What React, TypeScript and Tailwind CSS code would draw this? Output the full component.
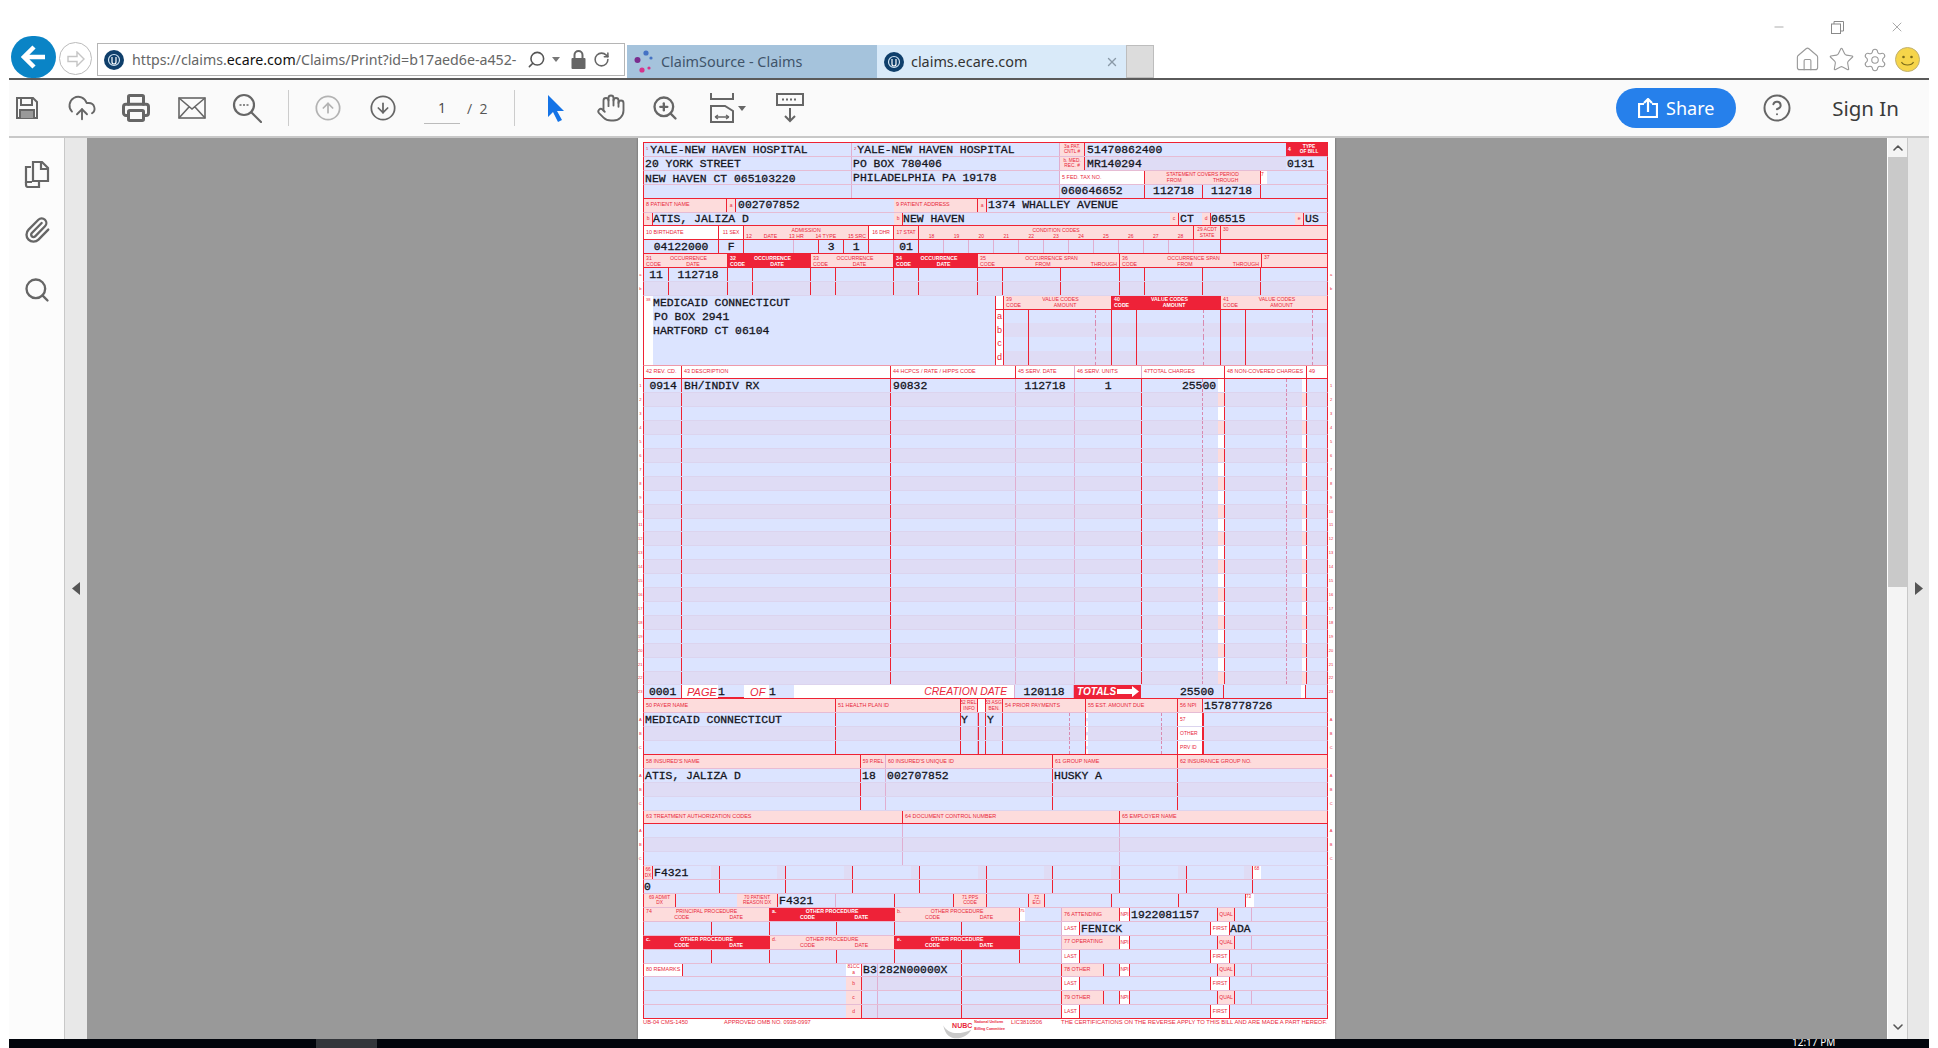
import React from "react";
import { CloudUpload, Printer, CircleArrowUp, CircleArrowDown, Hand, ZoomIn, CircleHelp, House, Star, Settings, Paperclip, Search, RotateCw, Minus, X, ChevronUp, ChevronDown } from "lucide-react";

type P = { children?: React.ReactNode };
const kinds: Record<string, string> = {
  t: "",
  p: "bg-[#fddcdc] text-[#e8273a]",
  r: "bg-[#ee2238] text-white",
  w: "bg-white text-[#e8273a]",
  d: "bg-[#dfdcf5]",
  f: "bg-[#dce4ff]",
};
const borders: Record<string, string> = {
  r: "border-r border-r-[#ee2233]",
  s: "border-r border-r-[#e0aed0]",
  h: "border-r border-dashed border-r-[#d98ab0]",
  n: "",
};
function C({ w, k = "t", b = "r", className = "", children }: { w: string; k?: string; b?: string; className?: string; children?: React.ReactNode }) {
  return <div className={`flex h-full shrink-0 items-center whitespace-nowrap ${w} ${kinds[k]} ${borders[b]} ${className}`}>{children}</div>;
}
function Row({ alt, strong, soft, l, r, children }: { alt?: boolean; strong?: boolean; soft?: boolean; l?: string; r?: string; children?: React.ReactNode }) {
  return (
    <div className="flex h-[13.92px]">
      <div className="flex w-[5.6px] shrink-0 items-center justify-center text-[4px] text-[#e8273a]">{l}</div>
      <div className={`flex w-[685px] shrink-0 border-x border-b border-x-[#ee2233] ${strong ? "border-b-[#ee2233]" : soft ? "border-b-[#dcd4ee]" : "border-b-[#e6bcd4]"} ${alt ? "bg-[#dfdcf5]" : "bg-[#dce4ff]"}`}>{children}</div>
      <div className="flex w-[6px] shrink-0 items-center justify-center text-[4px] text-[#e8273a]">{r}</div>
    </div>
  );
}
const T = ({ children, className = "" }: P & { className?: string }) => (
  <span className={`translate-y-[1px] font-['Liberation_Mono'] text-[11.4px] leading-none font-normal text-[#14141c] [-webkit-text-stroke:0.3px_#14141c] ${className}`}>{children}</span>
);
const L = ({ children, className = "" }: P & { className?: string }) => (
  <span className={`pl-[2px] text-[5.4px] leading-none ${className}`}>{children}</span>
);
function Two({ t, b, className = "" }: { t: string[]; b: string[]; className?: string }) {
  return (
    <div className={`flex w-full flex-col px-[2px] text-[5.2px] leading-[6.2px] ${className}`}>
      <div className="flex justify-between">{t.map((s, i) => <span key={i}>{s}</span>)}</div>
      <div className="flex justify-between">{b.map((s, i) => <span key={i}>{s}</span>)}</div>
    </div>
  );
}
const Sm = ({ children }: P) => <span className="w-full text-center text-[5px] leading-none text-[#e8273a]">{children}</span>;
const Tiny = ({ a, b }: { a: string; b: string }) => (
  <div className="flex w-full flex-col items-center text-[4.8px] leading-[5.6px]"><span>{a}</span><span>{b}</span></div>
);

function Occ({ alt, text, l, r }: { alt?: boolean; text?: boolean; l: string; r: string }) {
  return (
    <Row alt={alt} soft l={l} r={r}>
      <C w="w-[25px]" className="justify-center">{text && <T>11</T>}</C>
      <C w="w-[59px]" className="justify-center">{text && <T>112718</T>}</C>
      <C w="w-[25px]" />
      <C w="w-[58px]" />
      <C w="w-[25px]" />
      <C w="w-[58px]" />
      <C w="w-[25px]" />
      <C w="w-[59px]" />
      <C w="w-[25px]" />
      <C w="w-[58px]" />
      <C w="w-[59px]" />
      <C w="w-[25px]" />
      <C w="w-[58px]" />
      <C w="w-[58px]" />
      <div className="flex-1" />
    </Row>
  );
}
function Line({ n }: { n: number }) {
  const alt = n % 2 === 0;
  return (
    <Row alt={alt} soft l={String(n)} r={String(n)}>
      <C w="w-[38px]" className="justify-center pl-[1px]">{n === 1 && <T>0914</T>}</C>
      <C w="w-[209px]" className="pl-[2px]">{n === 1 && <T>BH/INDIV RX</T>}</C>
      <C w="w-[125px]" b="s" className="pl-[2px]">{n === 1 && <T>90832</T>}</C>
      <C w="w-[59px]" b="s" className="justify-center">{n === 1 && <T>112718</T>}</C>
      <C w="w-[67px]" className="justify-center">{n === 1 && <T>1</T>}</C>
      <C w="w-[61px]" b="h" />
      <C w="w-[15px]" b="n" className="relative">{n === 1 && <T className="absolute right-[2px]">25500</T>}</C>
      <C w="w-[7px]" k={alt ? "p" : "w"} />
      <C w="w-[62px]" b="h" />
      <C w="w-[15px]" b="n" />
      <C w="w-[5px]" k={alt ? "p" : "w"} />
      <div className="flex-1" />
    </Row>
  );
}

function PayerRow({ l, alt, text, label }: { l: string; alt?: boolean; text?: boolean; label: React.ReactNode }) {
  return (
    <Row l={l} r={l} alt={alt} soft={l !== "C"} strong={l === "C"}>
      <C w="w-[192px]">{text && <T className="pl-[1px]">MEDICAID CONNECTICUT</T>}</C>
      <C w="w-[125px]" />
      <C w="w-[17px]" b="s">{text && <T>Y</T>}</C>
      <C w="w-[8px]" className="border-l border-l-[#ee2233]" />
      <C w="w-[17px]" className="pl-[1px]">{text && <T>Y</T>}</C>
      <C w="w-[67px]" b="h" />
      <C w="w-[16px]" />
      <C w="w-[76px]" b="h" className="border-l-2 border-l-white" />
      <C w="w-[16px]" />
      <C w="w-[25px]" k="w" className="pl-[2px] text-[5px]">{label}</C>
      <div className="flex-1 border-l border-l-[#ee2233]" />
    </Row>
  );
}
function InsRow({ l, alt, text }: { l: string; alt?: boolean; text?: boolean }) {
  return (
    <Row l={l} r={l} alt={alt} soft>
      <C w="w-[217px]" className="pl-[1px]">{text && <T>ATIS, JALIZA D</T>}</C>
      <C w="w-[25px]" b="s" className="pl-[1px]">{text && <T>18</T>}</C>
      <C w="w-[167px]" className="pl-[1px]">{text && <T>002707852</T>}</C>
      <C w="w-[125px]" className="pl-[1px]">{text && <T>HUSKY A</T>}</C>
      <div className="flex-1" />
    </Row>
  );
}
function DxCells({ alt }: { alt?: boolean }) {
  return (
    <>
      {[0, 1, 2, 3, 4, 5, 6, 7, 8].map((i) => (
        <div key={i} className="flex h-full w-[66.7px] shrink-0 justify-end border-r border-r-[#ee2233]">
          {!alt && <div className="h-full w-[8px] bg-[#dfdcf5]" />}
        </div>
      ))}
    </>
  );
}
function ProcHead({ k, w, a, b = "" }: { k: string; w: string; a: string; b?: string }) {
  return (
    <C w={w} k={k}>
      <div className={`flex w-full flex-col text-[5.2px] leading-[6.2px] ${k === "r" ? "font-bold" : ""}`}>
        <div className="relative text-center">
          <span className="absolute left-[2px]">{a}</span>
          {b}
        </div>
        <div className="flex justify-around pl-[10px] pr-[6px]"><span>CODE</span><span>DATE</span></div>
      </div>
    </C>
  );
}
function ProcCells() {
  return (
    <>
      <C w="w-[68px]" />
      <C w="w-[58px]" />
      <C w="w-[67px]" />
      <C w="w-[58px]" />
      <C w="w-[67px]" />
      <C w="w-[58px]" />
    </>
  );
}
function Phys({ name, npi, hw = "w-[58px]" }: { name: string; npi?: string; hw?: string }) {
  return (
    <>
      <C w={hw} k="p"><L>{name}</L></C>
      {hw === "w-[42px]" && <C w="w-[16px]" />}
      <C w="w-[10px]" k="w"><Sm>NPI</Sm></C>
      <C w="w-[88px]" className="pl-[1px]">{npi && <T>{npi}</T>}</C>
      <C w="w-[17px]" k="p"><Sm>QUAL</Sm></C>
      <C w="w-[17px]" b="s" />
      <div className="flex-1" />
    </>
  );
}
function Names({ last, first }: { last?: string; first?: string }) {
  return (
    <>
      <C w="w-[18px]" k="w"><Sm>LAST</Sm></C>
      <C w="w-[131px]" className="pl-[1px]">{last && <T>{last}</T>}</C>
      <C w="w-[19px]" k="w"><Sm>FIRST</Sm></C>
      <div className="flex flex-1 items-center">{first && <T>{first}</T>}</div>
    </>
  );
}

function Form() {
  return (
    <div className="flex w-[697px] shrink-0 flex-col bg-white pt-[4px] font-['Liberation_Sans'] text-[#e8273a] shadow-[0_0_2px_rgba(0,0,0,0.4)]">
      <div className="ml-[5.6px] h-px w-[685px] shrink-0 bg-[#ee2233]" />
      <Row>
        <C w="w-[208px]" b="s" className="gap-[1px] pl-[2px]"><span className="text-[4px] text-[#e8273a]">1</span><T className="pl-[1px]">YALE-NEW HAVEN HOSPITAL</T></C>
        <C w="w-[208px]" b="s" className="gap-[1px] pl-[2px]"><span className="text-[4px] text-[#e8273a]">2</span><T>YALE-NEW HAVEN HOSPITAL</T></C>
        <C w="w-[25px]" k="p"><Tiny a="3a PAT." b="CNTL #" /></C>
        <C w="w-[201px]" b="n" className="pl-[2px]"><T>51470862400</T></C>
        <C w="w-[42px]" k="r" b="n" className="flex-1 font-bold"><span className="pl-[2px] text-[5px]">4</span><Tiny a="TYPE" b="OF BILL" /></C>
      </Row>
      <Row alt>
        <C w="w-[208px]" b="s" className="bg-[#dce4ff] pl-[1px]"><T>20 YORK STREET</T></C>
        <C w="w-[208px]" b="s" className="bg-[#dce4ff] pl-[1px]"><T>PO BOX 780406</T></C>
        <C w="w-[25px]" k="p"><Tiny a="b. MED." b="REC. #" /></C>
        <C w="w-[201px]" b="n" className="pl-[2px]"><T>MR140294</T></C>
        <div className="flex flex-1 items-center bg-[#dce4ff] pl-[1px]"><T>0131</T></div>
      </Row>
      <Row>
        <C w="w-[208px]" b="s" className="pl-[1px] pt-[2px]"><T>NEW HAVEN CT 065103220</T></C>
        <C w="w-[208px]" b="s" className="pl-[1px] pt-[1px]"><T>PHILADELPHIA PA 19178</T></C>
        <C w="w-[85px]" k="w"><L>5 FED. TAX NO.</L></C>
        <C w="w-[116px]" k="p"><div className="flex w-full flex-col text-[5px] leading-[6px]"><div className="text-center">STATEMENT COVERS PERIOD</div><div className="flex justify-around px-[6px]"><span>FROM</span><span>THROUGH</span></div></div></C>
        <C w="w-[6px]" k="w" b="n" className="items-start text-[5px]">7</C>
      </Row>
      <Row strong>
        <C w="w-[208px]" b="s" />
        <C w="w-[208px]" b="s" />
        <C w="w-[85px]" className="pl-[1px]"><T>060646652</T></C>
        <C w="w-[58px]" className="justify-center"><T>112718</T></C>
        <C w="w-[58px]" className="justify-center"><T>112718</T></C>
        <div className="flex-1" />
      </Row>
      <Row>
        <C w="w-[83px]" k="p"><L>8 PATIENT NAME</L></C>
        <C w="w-[9px]" k="p"><Sm>a</Sm></C>
        <C w="w-[158px]" b="n" className="pl-[2px]"><T>002707852</T></C>
        <C w="w-[84px]" k="p"><L>9 PATIENT ADDRESS</L></C>
        <C w="w-[9px]" k="p"><Sm>a</Sm></C>
        <div className="flex flex-1 items-center pl-[1px]"><T>1374 WHALLEY AVENUE</T></div>
      </Row>
      <Row strong>
        <C w="w-[9px]" k="p"><Sm>b</Sm></C>
        <C w="w-[241px]" b="n"><T>ATIS, JALIZA D</T></C>
        <C w="w-[9px]" k="p"><Sm>b</Sm></C>
        <C w="w-[267px]" b="n"><T>NEW HAVEN</T></C>
        <C w="w-[9px]" k="p"><Sm>c</Sm></C>
        <C w="w-[23px]" b="n" className="pl-[1px]"><T>CT</T></C>
        <C w="w-[9px]" k="p"><Sm>d</Sm></C>
        <C w="w-[84px]" b="n"><T>06515</T></C>
        <C w="w-[9px]" k="p"><Sm>e</Sm></C>
        <div className="flex flex-1 items-center pl-[1px]"><T>US</T></div>
      </Row>
      <Row strong>
        <C w="w-[75px]" k="w"><L>10 BIRTHDATE</L></C>
        <C w="w-[25px]" k="w"><Sm>11 SEX</Sm></C>
        <C w="w-[125px]" k="p"><Two className="text-[4.8px]" t={["", "ADMISSION", ""]} b={["12", "DATE", "13 HR", "14 TYPE", "15 SRC"]} /></C>
        <C w="w-[25px]" k="w"><Sm>16 DHR</Sm></C>
        <C w="w-[25px]" k="p"><Sm>17 STAT</Sm></C>
        <C w="w-[275px]" k="p"><div className="flex w-full flex-col text-[5px] leading-[6px]"><div className="text-center">CONDITION CODES</div><div className="flex justify-around">{[18, 19, 20, 21, 22, 23, 24, 25, 26, 27, 28].map((n) => <span key={n}>{n}</span>)}</div></div></C>
        <C w="w-[27px]" k="p"><Tiny a="29 ACDT" b="STATE" /></C>
        <div className="flex-1 bg-[#fddcdc] pl-[2px] text-[5px]">30</div>
      </Row>
      <Row strong>
        <C w="w-[75px]" className="justify-center"><T>04122000</T></C>
        <C w="w-[25px]" className="justify-center"><T>F</T></C>
        <C w="w-[50px]" b="s" />
        <C w="w-[25px]" />
        <C w="w-[25px]" className="justify-center"><T>3</T></C>
        <C w="w-[25px]" className="justify-center"><T>1</T></C>
        <C w="w-[25px]" b="s" />
        <C w="w-[25px]" className="justify-center"><T>01</T></C>
        {[0, 1, 2, 3, 4, 5, 6, 7, 8, 9, 10].map((i) => <C key={i} w="w-[25px]" b="s" />)}
        <C w="w-[27px]" />
        <div className="flex-1" />
      </Row>
      <Row strong>
        <C w="w-[84px]" k="p"><Two t={["31", "OCCURRENCE", ""]} b={["CODE", "DATE", ""]} /></C>
        <C w="w-[83px]" k="r" b="n" className="font-bold"><Two t={["32", "OCCURRENCE", ""]} b={["CODE", "DATE", ""]} /></C>
        <C w="w-[83px]" k="p"><Two t={["33", "OCCURRENCE", ""]} b={["CODE", "DATE", ""]} /></C>
        <C w="w-[84px]" k="r" b="n" className="font-bold"><Two t={["34", "OCCURRENCE", ""]} b={["CODE", "DATE", ""]} /></C>
        <C w="w-[142px]" k="p"><Two t={["35", "OCCURRENCE SPAN", ""]} b={["CODE", "FROM", "THROUGH"]} /></C>
        <C w="w-[142px]" k="p"><Two t={["36", "OCCURRENCE SPAN", ""]} b={["CODE", "FROM", "THROUGH"]} /></C>
        <div className="flex flex-1 items-start bg-[#fddcdc] pl-[2px] text-[5px]">37</div>
      </Row>
      <Occ text l="a" r="a" />
      <Occ alt l="b" r="b" />
      <div className="flex h-[69.6px] shrink-0">
        <div className="w-[5.6px] shrink-0" />
        <div className="flex w-[685px] shrink-0 border-x border-b border-x-[#ee2233] border-b-[#ee9aaa] bg-[#dce4ff]">
          <div className="flex h-full w-[351px] shrink-0">
            <div className="h-full w-[9px] bg-white pl-[2px] text-[4px] leading-[8px]">38</div>
            <div className="flex flex-col pt-[1px]">
              <T className="h-[14px] leading-[13px]">MEDICAID CONNECTICUT</T>
              <T className="h-[14px] pl-[1px] leading-[15px]">PO BOX 2941</T>
              <T className="h-[14px] leading-[15px]">HARTFORD CT 06104</T>
            </div>
          </div>
          <div className="flex h-full flex-1 flex-col border-l border-l-[#ee2233]">
            <div className="flex h-[13.9px] border-b border-b-[#ee2233]">
              <C w="w-[8px]" k="w" />
              <C w="w-[108px]" k="p"><Two t={["39", "VALUE CODES", ""]} b={["CODE", "AMOUNT", ""]} /></C>
              <C w="w-[109px]" k="r" b="n" className="font-bold"><Two t={["40", "VALUE CODES", ""]} b={["CODE", "AMOUNT", ""]} /></C>
              <div className="flex h-full flex-1 items-center bg-[#fddcdc]"><Two t={["41", "VALUE CODES", ""]} b={["CODE", "AMOUNT", ""]} /></div>
            </div>
            {["a", "b", "c", "d"].map((x, i) => (
              <div key={x} className={`flex h-[13.9px] ${i % 2 ? "bg-[#dfdcf5]" : "bg-[#dce4ff]"}`}>
                <C w="w-[8px]" k="w" className="justify-center text-[9px]">{x}</C>
                <C w="w-[25px]" />
                <C w="w-[67px]" b="h" />
                <C w="w-[16px]" />
                <C w="w-[25px]" />
                <C w="w-[67px]" b="h" />
                <C w="w-[17px]" />
                <C w="w-[25px]" />
                <C w="w-[67px]" b="h" />
                <div className="flex-1" />
              </div>
            ))}
          </div>
        </div>
      </div>
      <Row strong>
        <C w="w-[38px]" k="w"><L>42 REV. CD.</L></C>
        <C w="w-[209px]" k="w"><L>43 DESCRIPTION</L></C>
        <C w="w-[125px]" k="w"><L>44 HCPCS / RATE / HIPPS CODE</L></C>
        <C w="w-[59px]" k="w" b="s"><L>45 SERV. DATE</L></C>
        <C w="w-[67px]" k="w" b="s"><L>46 SERV. UNITS</L></C>
        <C w="w-[83px]" k="w"><L>47TOTAL CHARGES</L></C>
        <C w="w-[82px]" k="w"><L>48 NON-COVERED CHARGES</L></C>
        <div className="flex flex-1 items-center bg-white"><L>49</L></div>
      </Row>
      {Array.from({ length: 22 }, (_, i) => <Line key={i} n={i + 1} />)}
      <Row strong l="23" r="23">
        <C w="w-[38px]" className="justify-center"><T>0001</T></C>
        <C w="w-[36px]" k="w" b="n" className="pl-[5px] text-[11px] italic">PAGE</C>
        <C w="w-[26px]" b="n" className="border-b border-b-[#ee2233]"><T>1</T></C>
        <C w="w-[25px]" k="w" b="n" className="pl-[6px] text-[11px] italic">OF</C>
        <C w="w-[25px]" b="n"><T>1</T></C>
        <C w="w-[221px]" k="w" b="s" className="justify-end pr-[7px] text-[10.4px] italic">CREATION DATE</C>
        <C w="w-[59px]" b="s" className="justify-center"><T>120118</T></C>
        <C w="w-[67px]" k="r" b="n" className="justify-between pl-[3px] pr-[1px] text-[10px] font-bold italic">TOTALS
          <svg width="23" height="11" viewBox="0 0 23 11" className="shrink-0"><path d="M0 3h15V0l7 5.5-7 5.5V8H0z" fill="#fff" /></svg>
        </C>
        <C w="w-[61px]" b="n" />
        <C w="w-[22px]" className="relative"><T className="absolute right-[9px]">25500</T></C>
        <C w="w-[77px]" b="n" />
        <C w="w-[5px]" k="w" />
        <div className="flex-1" />
      </Row>
      <Row>
        <C w="w-[192px]" k="p"><L>50 PAYER NAME</L></C>
        <C w="w-[125px]" k="p"><L>51 HEALTH PLAN ID</L></C>
        <C w="w-[17px]" k="p"><Tiny a="52 REL." b="INFO" /></C>
        <C w="w-[8px]" k="w" />
        <C w="w-[17px]" k="p"><Tiny a="53 ASG." b="BEN." /></C>
        <C w="w-[83px]" k="p"><L>54 PRIOR PAYMENTS</L></C>
        <C w="w-[92px]" k="p"><L>55 EST. AMOUNT DUE</L></C>
        <C w="w-[25px]" k="p"><L>56 NPI</L></C>
        <div className="flex flex-1 items-center pl-[1px]"><T>1578778726</T></div>
      </Row>
      <PayerRow l="A" text label="57" />
      <PayerRow l="B" alt label="OTHER" />
      <PayerRow l="C" label="PRV ID" />
      <Row>
        <C w="w-[217px]" k="p"><L>58 INSURED'S NAME</L></C>
        <C w="w-[25px]" k="p" b="s"><Sm>59 P.REL</Sm></C>
        <C w="w-[167px]" k="p"><L>60 INSURED'S UNIQUE ID</L></C>
        <C w="w-[125px]" k="p"><L>61 GROUP NAME</L></C>
        <div className="flex flex-1 items-center bg-[#fddcdc]"><L>62 INSURANCE GROUP NO.</L></div>
      </Row>
      <InsRow l="A" text />
      <InsRow l="B" alt />
      <InsRow l="C" />
      <Row strong>
        <C w="w-[259px]" k="p"><L>63 TREATMENT AUTHORIZATION CODES</L></C>
        <C w="w-[217px]" k="p"><L>64 DOCUMENT CONTROL NUMBER</L></C>
        <div className="flex flex-1 items-center bg-[#fddcdc]"><L>65 EMPLOYER NAME</L></div>
      </Row>
      {["A", "B", "C"].map((l, i) => (
        <Row key={l} l={l} r={l} alt={i === 1} soft>
          <C w="w-[259px]" b="s" />
          <C w="w-[217px]" b="s" />
          <div className="flex-1" />
        </Row>
      ))}
      <Row>
        <C w="w-[9px]" k="p"><Tiny a="66" b="DX" /></C>
        <div className="relative flex flex-1">
          <DxCells />
          <T className="absolute left-[1px] top-[1px]">F4321</T>
          <div className="h-full w-[8px] shrink-0 bg-white pl-[1px] text-[4.5px] text-[#e8273a]">68</div>
        </div>
      </Row>
      <Row>
        <C w="w-[9px]" b="n"><T>0</T></C>
        <div className="flex flex-1"><DxCells alt /></div>
      </Row>
      <Row>
        <C w="w-[32px]" k="p"><Tiny a="69 ADMIT" b="DX" /></C>
        <C w="w-[61px]" b="n" />
        <C w="w-[41px]" k="p"><Tiny a="70 PATIENT" b="REASON DX" /></C>
        <C w="w-[58px]" b="s" className="pl-[1px]"><T>F4321</T></C>
        <C w="w-[59px]" />
        <C w="w-[59px]" />
        <C w="w-[33px]" k="p"><Tiny a="71 PPS" b="CODE" /></C>
        <C w="w-[42px]" />
        <C w="w-[16px]" k="p"><Tiny a="72" b="ECI" /></C>
        <C w="w-[67px]" className="justify-end" />
        <C w="w-[67px]" />
        <C w="w-[67px]" />
        <C w="w-[8px]" k="w" b="n" className="items-start text-[4.5px]">73</C>
        <div className="flex-1" />
      </Row>
      <Row>
        <ProcHead k="p" w="w-[126px]" a="74" b="PRINCIPAL PROCEDURE" />
        <ProcHead k="r" w="w-[125px]" a="a." b="OTHER PROCEDURE" />
        <ProcHead k="p" w="w-[125px]" a="b." b="OTHER PROCEDURE" />
        <C w="w-[5px]" k="w" b="n" className="items-start text-[4px]">75</C>
        <C w="w-[37px]" b="s" />
        <Phys name="76 ATTENDING" npi="1922081157" />
      </Row>
      <Row>
        <ProcCells />
        <C w="w-[42px]" b="s" />
        <Names last="FENICK" first="ADA" />
      </Row>
      <Row>
        <ProcHead k="r" w="w-[126px]" a="c." b="OTHER PROCEDURE" />
        <ProcHead k="p" w="w-[125px]" a="d." b="OTHER PROCEDURE" />
        <ProcHead k="r" w="w-[125px]" a="e." b="OTHER PROCEDURE" />
        <C w="w-[42px]" b="s" />
        <Phys name="77 OPERATING" />
      </Row>
      <Row>
        <ProcCells />
        <C w="w-[42px]" b="s" />
        <Names />
      </Row>
      <Row>
        <C w="w-[39px]" k="w"><L>80 REMARKS</L></C>
        <C w="w-[163px]" b="n" />
        <C w="w-[16px]" k="w"><Tiny a="81CC" b="a" /></C>
        <C w="w-[16px]" b="s" className="pl-[1px]"><T>B3</T></C>
        <C w="w-[84px]" className="pl-[1px]"><T>282N00000X</T></C>
        <C w="w-[100px]" />
        <Phys name="78 OTHER" hw="w-[42px]" />
      </Row>
      <Row>
        <C w="w-[202px]" b="n" />
        <C w="w-[16px]" k="p"><Sm>b</Sm></C>
        <C w="w-[16px]" b="s" className="bg-[#dfdcf5]" />
        <C w="w-[84px]" className="bg-[#dfdcf5]" />
        <C w="w-[100px]" className="bg-[#dfdcf5]" />
        <Names />
      </Row>
      <Row>
        <C w="w-[202px]" b="n" />
        <C w="w-[16px]" k="p"><Sm>c</Sm></C>
        <C w="w-[16px]" b="s" />
        <C w="w-[84px]" />
        <C w="w-[100px]" />
        <Phys name="79 OTHER" hw="w-[42px]" />
      </Row>
      <Row strong>
        <C w="w-[202px]" b="n" />
        <C w="w-[16px]" k="p"><Sm>d</Sm></C>
        <C w="w-[16px]" b="s" className="bg-[#dfdcf5]" />
        <C w="w-[84px]" className="bg-[#dfdcf5]" />
        <C w="w-[100px]" className="bg-[#dfdcf5]" />
        <Names />
      </Row>
      <div className="ml-[5.6px] flex w-[685px] items-start text-[5.7px] leading-[7px] whitespace-nowrap">
        <span className="w-[81px]">UB-04 CMS-1450</span>
        <span className="w-[228px]">APPROVED OMB NO. 0938-0997</span>
        <div className="relative flex w-[59px] items-center">
          <svg width="34" height="18" viewBox="0 0 30 16" className="absolute left-[-10px] top-[5px]"><path d="M1 1c4 8 14 9 25 4-5 9-22 13-25-4z" fill="#c9c9c9" /></svg>
          <span className="relative text-[7px] leading-[14px] font-bold">NUBC</span>
          <div className="relative pl-[2px] text-[3.6px] leading-[7px] font-bold"><div>National Uniform</div><div>Billing Committee</div></div>
        </div>
        <span className="w-[50px]">LIC3810506</span>
        <span className="text-[5.85px]">THE CERTIFICATIONS ON THE REVERSE APPLY TO THIS BILL AND ARE MADE A PART HEREOF.</span>
      </div>
    </div>
  );
}

const EcareLogo = () => (
  <svg width="20" height="20" viewBox="0 0 20 20" className="shrink-0">
    <circle cx="10" cy="10" r="10" fill="#0f3f6b" />
    <circle cx="10" cy="10" r="5.5" fill="none" stroke="#cfe3f3" strokeWidth="1.2" />
    <path d="M8 7v5a2 2 0 0 0 4 0V7" fill="none" stroke="#fff" strokeWidth="1.2" />
  </svg>
);

const Bare = "shrink-0 text-[#666]";

function Toolbar() {
  return (
    <div className="flex h-[58px] shrink-0 items-center border-b-2 border-b-[#c8c8c8] bg-[#fafafa]">
      <svg width="24" height="24" viewBox="0 0 24 24" className="ml-[6px] shrink-0" fill="none" stroke="#666" strokeWidth="2"><path d="M2 2h16l4 4v16H2z" /><path d="M6 2v7h11V2M5 22v-8h14v8" /><rect x="6" y="15" width="12" height="7" fill="#999" stroke="none" /></svg>
      <CloudUpload size={30} strokeWidth={1.5} className={`${Bare} ml-[28px]`} />
      <Printer size={30} strokeWidth={2.4} className={`${Bare} ml-[24px]`} />
      <svg width="28" height="22" viewBox="0 0 28 22" className="ml-[27px] shrink-0" fill="none" stroke="#666" strokeWidth="1.6"><rect x="1" y="1" width="26" height="20" /><path d="M1 1l13 11L27 1M1 21l10-11M27 21L17 10" /></svg>
      <svg width="30" height="30" viewBox="0 0 30 30" className="ml-[26px] shrink-0" fill="none" stroke="#666" strokeWidth="2.2"><circle cx="12" cy="12" r="10" /><path d="M19.5 19.5L29 29" strokeLinecap="round" /><path d="M7.5 12h2M11 12h2M14.5 12h2" strokeWidth="1.6" /></svg>
      <div className="ml-[26px] h-[36px] w-px shrink-0 bg-[#ccc]" />
      <CircleArrowUp size={28} strokeWidth={1.5} className="ml-[25px] shrink-0 text-[#b3b3b3]" />
      <CircleArrowDown size={28} strokeWidth={1.5} className={`${Bare} ml-[27px]`} />
      <div className="ml-[27px] flex h-[32px] w-[36px] shrink-0 items-center justify-center border-b border-b-[#bbb] font-['Open_Sans'] text-[14px] text-[#444]">1</div>
      <span className="ml-[7px] shrink-0 font-['Open_Sans'] text-[14px] whitespace-nowrap text-[#555]">/&nbsp; 2</span>
      <div className="ml-[27px] h-[36px] w-px shrink-0 bg-[#ccc]" />
      <svg width="18" height="28" viewBox="0 0 18 28" className="ml-[32px] shrink-0"><path d="M1 1l16 16h-7l5 9-4 2-5-10-5 5z" fill="#1473e6" /></svg>
      <Hand size={30} strokeWidth={1.5} className={`${Bare} ml-[31px]`} />
      <ZoomIn size={28} strokeWidth={2} className={`${Bare} ml-[25px]`} />
      <svg width="38" height="30" viewBox="0 0 38 30" className="ml-[30px] shrink-0" fill="none" stroke="#666" strokeWidth="2"><path d="M2 0v6h22V0" /><path d="M2 13h14l8 5v11H2z" /><path d="M6 24h14M6 24l3-2M6 24l3 2M20 24l-3-2M20 24l-3 2" strokeWidth="1.4" /><path d="M29 13h8l-4 5z" fill="#666" stroke="none" /></svg>
      <svg width="28" height="30" viewBox="0 0 28 30" className="ml-[29px] shrink-0" fill="none" stroke="#666" strokeWidth="2"><rect x="1" y="1" width="26" height="11" /><path d="M6 6.5h16" strokeDasharray="2 2" /><path d="M14 15v13M9 23l5 5 5-5" /></svg>
      <div className="flex-1" />
      <div className="flex h-[40px] w-[120px] shrink-0 items-center justify-center gap-[8px] rounded-full bg-[#2680eb] font-['Noto_Sans'] text-[18px] text-white">
        <svg width="20" height="20" viewBox="0 0 20 20" fill="none" stroke="#fff" strokeWidth="2.2"><path d="M6 6H1v13h18V6h-5" /><path d="M10 14V2M6 5l4-4 4 4" /></svg>
        Share
      </div>
      <CircleHelp size={30} strokeWidth={1.6} className={`${Bare} ml-[26px]`} />
      <span className="ml-[40px] mr-[30px] shrink-0 font-['Noto_Sans'] text-[20.5px] leading-none whitespace-nowrap text-[#3a3a3a]">Sign In</span>
    </div>
  );
}

export default function App() {
  return (
    <div className="flex h-[1048px] w-[1938px] flex-col overflow-hidden bg-white px-[9px] font-['Noto_Sans']">
      <header className="flex h-[80px] shrink-0 items-end border-b-2 border-b-[#5a5a5a]">
        <div className="ml-[2px] flex h-[42px] w-[45px] shrink-0 items-center justify-center rounded-full bg-[#0a84c6]">
          <svg width="26" height="24" viewBox="0 0 26 24" fill="none" stroke="#fff" strokeWidth="4.5"><path d="M24 12H4M13 2L3 12l10 10" /></svg>
        </div>
        <div className="mb-[3px] ml-[3px] flex h-[33px] w-[33px] shrink-0 items-center justify-center rounded-full border border-[#bbb]">
          <svg width="18" height="16" viewBox="0 0 18 16" fill="none" stroke="#c5c5c5" strokeWidth="1.4"><path d="M1 5.5h9V1l7 7-7 7v-4.5H1z" /></svg>
        </div>
        <div className="mb-[2px] ml-[5px] flex h-[33px] w-[528px] shrink-0 items-center border border-[#b5b5b5] pl-[6px] pr-[4px]">
          <EcareLogo />
          <div className="ml-[8px] w-[389px] shrink-0 overflow-hidden text-[14.2px] whitespace-nowrap text-[#666]">https://claims.<span className="text-[#111]">ecare.com</span>/Claims/Print?id=b17aed6e-a452-</div>
          <Search size={19} strokeWidth={2} className="ml-[6px] shrink-0 -scale-x-100 text-[#555]" />
          <svg width="8" height="5" viewBox="0 0 8 5" className="ml-[6px] shrink-0"><path d="M0 0h8L4 5z" fill="#777" /></svg>
          <svg width="15" height="19" viewBox="0 0 15 19" className="ml-[11px] shrink-0"><rect x="0.5" y="8" width="14" height="11" rx="1" fill="#666" /><path d="M3.5 8V5a4 4 0 0 1 8 0v3" fill="none" stroke="#666" strokeWidth="2" /></svg>
          <RotateCw size={17} strokeWidth={2.2} className="ml-[7px] shrink-0 text-[#666]" />
        </div>
        <div className="ml-[2px] flex h-[33px] w-[250px] shrink-0 items-center bg-[#a5c3dc] pl-[7px]">
          <svg width="20" height="26" viewBox="0 0 20 26" className="shrink-0">
            <circle cx="3.5" cy="11" r="3" fill="#7b2d8e" /><circle cx="12" cy="4" r="2.6" fill="#4472c4" /><circle cx="8" cy="21" r="2.6" fill="#d6338a" /><circle cx="15" cy="19" r="1.6" fill="#d6338a" /><circle cx="17" cy="9" r="1.6" fill="#4472c4" />
          </svg>
          <span className="ml-[7px] text-[14.4px] whitespace-nowrap text-[#40546a]">ClaimSource - Claims</span>
        </div>
        <div className="flex h-[33px] w-[249px] shrink-0 items-center bg-[#d9eaf9] pl-[7px] pr-[7px]">
          <EcareLogo />
          <span className="ml-[7px] flex-1 text-[14.4px] whitespace-nowrap text-[#333]">claims.ecare.com</span>
          <X size={14} strokeWidth={2.4} className="shrink-0 text-[#8a9aa8]" />
        </div>
        <div className="h-[33px] w-[28px] shrink-0 border border-[#bdbdbd] bg-[#dcdcdc]" />
        <div className="flex h-full flex-1 flex-col items-end">
          <div className="flex h-[46px] items-center gap-[45px] pt-[8px] pr-[24px] text-[#8a8a8a]">
            <Minus size={14} strokeWidth={1.2} />
            <svg width="13" height="13" viewBox="0 0 13 13" fill="none" stroke="#8a8a8a"><rect x="0.5" y="3" width="9" height="9.5" /><path d="M3 3V0.5h9.5V10H9.5" /></svg>
            <X size={16} strokeWidth={1.1} />
          </div>
          <div className="flex items-center gap-[7px] pr-[9px]">
            <House size={27} strokeWidth={1} className="text-[#999]" />
            <Star size={27} strokeWidth={1} className="text-[#999]" />
            <Settings size={26} strokeWidth={1} className="text-[#999]" />
            <svg width="25" height="25" viewBox="0 0 25 25"><circle cx="12.5" cy="12.5" r="12" fill="#f6d54a" stroke="#c0b070" /><circle cx="8.5" cy="10" r="1.3" fill="#7a6a1a" /><circle cx="16.5" cy="10" r="1.3" fill="#7a6a1a" /><path d="M6.5 15c2 4 10 4 12 0" fill="none" stroke="#7a6a1a" strokeWidth="1.2" /></svg>
          </div>
        </div>
      </header>
      <Toolbar />
      <main className="flex h-[901px] shrink-0">
        <aside className="flex w-[56px] shrink-0 flex-col items-center border-r border-r-[#c8c8c8] bg-[#fcfcfc] pt-[22px]">
          <svg width="26" height="28" viewBox="0 0 26 28" fill="none" stroke="#666" strokeWidth="2.2"><path d="M8 22H2V7h5" /><path d="M2 22v3a2 2 0 0 0 2 2h11v-5" /><path d="M9 2h9l6 6v13H9z" /><path d="M17 2v7h7" /></svg>
          <Paperclip size={28} strokeWidth={2} className="mt-[28px] text-[#666]" />
          <Search size={28} strokeWidth={2} className="mt-[32px] text-[#666]" />
        </aside>
        <div className="flex w-[22px] shrink-0 items-center justify-center bg-[#e8e8e8]">
          <svg width="8" height="13" viewBox="0 0 8 13"><path d="M8 0v13L0 6.5z" fill="#555" /></svg>
        </div>
        <div className="flex w-[1800px] shrink-0 justify-center overflow-hidden bg-[#999999] pr-[2px]">
          <Form />
        </div>
        <div className="flex w-[20px] shrink-0 flex-col items-center justify-between border-l border-l-white bg-[#f4f4f4]">
          <ChevronUp size={16} strokeWidth={2.4} className="mt-[2px] text-[#555]" />
          <div className="-mt-[432px] h-[430px] w-[19px] bg-[#c9c9c9]" />
          <ChevronDown size={16} strokeWidth={2.4} className="mb-[4px] text-[#555]" />
        </div>
        <div className="flex flex-1 items-center justify-center border-l border-l-[#c8c8c8] bg-[#e8e8e8]">
          <svg width="8" height="13" viewBox="0 0 8 13"><path d="M0 0v13l8-6.5z" fill="#555" /></svg>
        </div>
      </main>
      <footer className="flex h-[9px] shrink-0 items-start bg-[#02050c]">
        <div className="ml-[307px] h-full w-[61px] bg-[#33363b]" />
        <div className="ml-[1415px] overflow-hidden text-[10px] leading-[9px] whitespace-nowrap text-white">
          <div className="-mt-[1px]">12:17 PM</div>
        </div>
      </footer>
    </div>
  );
}
